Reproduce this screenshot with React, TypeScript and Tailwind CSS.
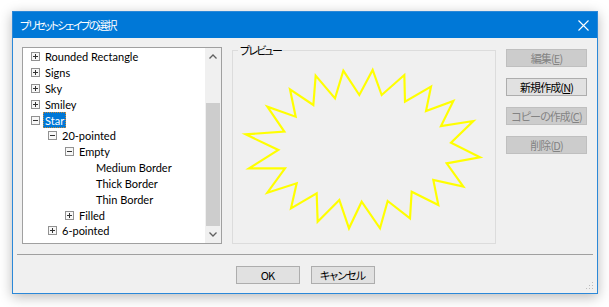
import React from "react";

type Row = { label: string; level: number; exp?: "+" | "-"; selected?: boolean };

const rows: Row[] = [
  { label: "Rounded Rectangle", level: 0, exp: "+" },
  { label: "Signs", level: 0, exp: "+" },
  { label: "Sky", level: 0, exp: "+" },
  { label: "Smiley", level: 0, exp: "+" },
  { label: "Star", level: 0, exp: "-", selected: true },
  { label: "20-pointed", level: 1, exp: "-" },
  { label: "Empty", level: 2, exp: "-" },
  { label: "Medium Border", level: 3 },
  { label: "Thick Border", level: 3 },
  { label: "Thin Border", level: 3 },
  { label: "Filled", level: 2, exp: "+" },
  { label: "6-pointed", level: 1, exp: "+" },
];

const indent = ["pl-[8px]", "pl-[25px]", "pl-[42px]", "pl-[59px]"];

const outer = [
  [355, 92], [443, 90], [538, 105], [618, 140], [685, 183], [745, 243], [765, 352], [715, 440],
  [640, 495], [555, 535], [465, 565], [372, 565], [278, 545], [198, 505], [127, 458], [72, 385],
  [62, 283], [127, 200], [195, 148], [272, 107],
];
const inner = [
  [403, 165], [470, 165], [540, 185], [603, 213], [648, 258], [678, 308], [665, 370], [625, 420],
  [560, 455], [488, 483], [410, 485], [343, 480], [275, 460], [215, 430], [180, 385], [160, 330],
  [178, 275], [212, 230], [265, 195], [330, 175],
];
const starPts = outer.map((p, i) => `${p[0]},${p[1]} ${inner[i][0]},${inner[i][1]}`).join(" ");

function Expander({ sign }: { sign: "+" | "-" }) {
  return (
    <svg width="9" height="9" viewBox="0 0 9 9" className="shrink-0">
      <rect x="0.5" y="0.5" width="8" height="8" fill="#f7f7f7" stroke="#919191" />
      <path d="M2 4.5h5" stroke="#333" strokeWidth="1" />
      {sign === "+" && <path d="M4.5 2v5" stroke="#333" strokeWidth="1" />}
    </svg>
  );
}

function Btn({ children, disabled, className = "" }: { children: React.ReactNode; disabled?: boolean; className?: string }) {
  return (
    <div
      className={
        "h-[18px] flex items-center justify-center border text-[11px] leading-none tracking-[-0.9px] " +
        (disabled ? "bg-[#cccccc] border-[#bfbfbf] text-[#838383] " : "bg-[#e1e1e1] border-[#adadad] text-black ") +
        className
      }
    >
      {children}
    </div>
  );
}

export default function App() {
  const jp = "font-['Noto_Sans_CJK_JP',sans-serif] [font-feature-settings:'palt']";
  return (
    <div className="w-[609px] h-[307px] bg-white pt-[11px] pl-[12px] font-['Lato','Noto_Sans_CJK_JP',sans-serif]">
      <div className="relative w-[586px] h-[283px] border border-[#2b88d8] flex flex-col shadow-[0_3px_12px_rgba(0,0,0,0.28)]">
        {/* title bar */}
        <div className={"h-[26px] bg-[#0078d7] flex items-center justify-between pl-[7px] pr-[7px] text-white text-[11px] " + jp}>
          <span className="leading-none tracking-[-1.9px]">プリセットシェイプの選択</span>
          <svg width="11" height="11" viewBox="0 0 11 11" className="mr-[1px]">
            <path d="M0.5 0.5l10 10M10.5 0.5l-10 10" stroke="white" strokeWidth="1.1" />
          </svg>
        </div>
        {/* body */}
        <div className="flex-1 bg-[#f0f0f0] flex flex-col">
          <div className="flex pl-[9px] pt-[9px]">
            {/* tree */}
            <div className="w-[200px] h-[197px] border border-[#a0a0a0] bg-white flex">
              <div className="flex-1 pt-[1px] text-[11px] text-black">
                {rows.map((r) => (
                  <div key={r.label} className={"h-[15.82px] flex items-center " + indent[r.level]}>
                    {r.exp ? <Expander sign={r.exp} /> : <span className="w-[9px] shrink-0" />}
                    <span
                      className={
                        "ml-[3px] h-[16px] flex items-center px-[1px] leading-none whitespace-nowrap " +
                        (r.selected
                          ? "bg-[#0078d7] text-white border border-dotted border-[#c98a3a]"
                          : "border border-transparent")
                      }
                    >
                      {r.label}
                    </span>
                  </div>
                ))}
              </div>
              {/* scrollbar */}
              <div className="w-[16px] bg-[#f0f0f0] flex flex-col">
                <div className="h-[17px] flex items-center justify-center">
                  <svg width="8" height="5" viewBox="0 0 8 5">
                    <path d="M0.5 4.5L4 1L7.5 4.5" fill="none" stroke="#606060" strokeWidth="1.3" />
                  </svg>
                </div>
                <div className="flex-1 flex flex-col pt-[38px] px-[1px]">
                  <div className="flex-1 bg-[#cdcdcd]" />
                </div>
                <div className="h-[17px] flex items-center justify-center">
                  <svg width="8" height="5" viewBox="0 0 8 5">
                    <path d="M0.5 0.5L4 4L7.5 0.5" fill="none" stroke="#606060" strokeWidth="1.3" />
                  </svg>
                </div>
              </div>
            </div>
            {/* preview group */}
            <div className="ml-[10px] mt-[3px] relative w-[264px] h-[194px] border border-[#dcdcdc]">
              <svg
                width="264"
                height="194"
                viewBox="21 30 792 582"
                className="absolute -left-px -top-px"
              >
                <polygon points={starPts} fill="none" stroke="#ffff00" strokeWidth="6.5" strokeLinejoin="miter" />
              </svg>
              <span className={"absolute left-[5px] -top-[8px] bg-[#f0f0f0] px-[2px] text-[11px] tracking-[-1.8px] leading-[15px] text-black " + jp}>
                プレビュー
              </span>
            </div>
            {/* buttons */}
            <div className={"ml-[10px] mt-[2px] w-[81px] flex flex-col gap-[11px] " + jp}>
              <Btn disabled>編集(<u>E</u>)</Btn>
              <Btn>新規作成(<u>N</u>)</Btn>
              <Btn disabled>コピーの作成(<u>C</u>)</Btn>
              <Btn disabled>削除(<u>D</u>)</Btn>
            </div>
          </div>
          <div className="mx-[4px] mt-[10px] h-[1px] bg-[#a0a0a0]" />
          <div className={"mt-[11px] flex justify-center gap-[11px] " + jp}>
            <Btn className="w-[64px]">OK</Btn>
            <Btn className="w-[64px]">キャンセル</Btn>
          </div>
        </div>
        {/* resize grip */}
        <svg width="8" height="8" viewBox="0 0 8 8" className="absolute right-[3px] bottom-[3px]">
          <rect x="6" y="0" width="1" height="1" fill="#bdbdbd" />
          <rect x="3" y="3" width="1" height="1" fill="#bdbdbd" />
          <rect x="6" y="3" width="1" height="1" fill="#bdbdbd" />
          <rect x="0" y="6" width="1" height="1" fill="#bdbdbd" />
          <rect x="3" y="6" width="1" height="1" fill="#bdbdbd" />
          <rect x="6" y="6" width="1" height="1" fill="#bdbdbd" />
        </svg>
      </div>
    </div>
  );
}
